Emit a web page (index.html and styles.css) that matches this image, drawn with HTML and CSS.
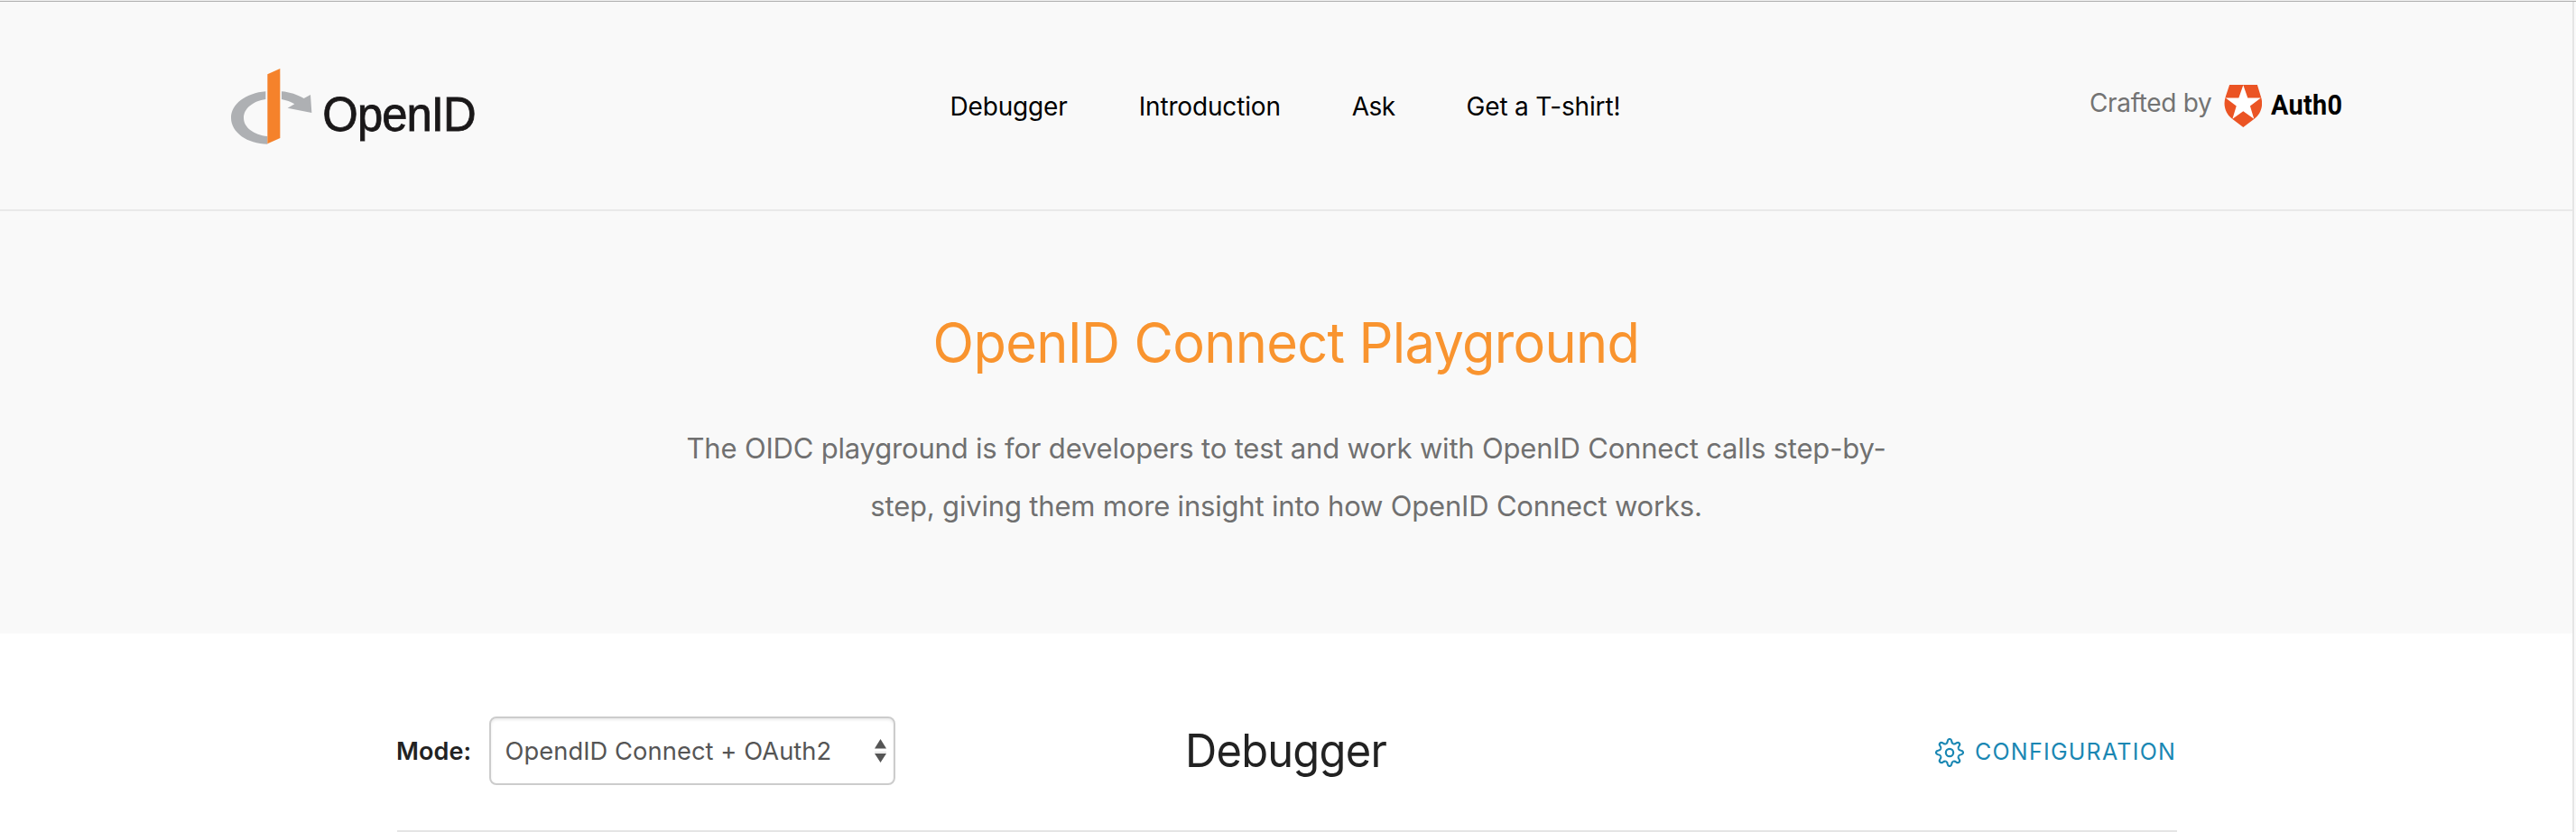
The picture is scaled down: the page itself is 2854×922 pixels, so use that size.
FILE: index.html
```html
<!DOCTYPE html>
<html lang="en">
<head>
<meta charset="utf-8">
<title>OpenID Connect Playground</title>
<link rel="stylesheet" href="styles.css">
</head>
<body>
<div class="page">
  <header class="header">
    <a class="logo">
      <svg class="logo-art" viewBox="0 0 900 330" role="img" aria-label="OpenID">
        <path class="logo-gray" d="M163 124C98 129 48 166 48 212C48 260 102 298 169 299V273C124 268 90 244 90 212C90 181 121 156 163 150Z"/>
        <path class="logo-gray" d="M216 124C243 126 269 135 290 147L312 135L316 195L236 179L259 166C246 158 232 153 216 150Z"/>
        <path class="logo-orange" d="M169 67L211 48V279L169 298Z"/>
        <text class="logo-text" x="352" y="256" textLength="508" lengthAdjust="spacingAndGlyphs">OpenID</text>
      </svg>
    </a>
    <nav class="nav">
      <a>Debugger</a><a>Introduction</a><a class="nav-ask">Ask</a><a>Get a T-shirt!</a>
    </nav>
    <div class="crafted">
      <span class="crafted-by">Crafted by</span>
      <svg class="shield" viewBox="492 43 126 142">
        <path class="shield-body" d="M510 43H603L615 82C625 112 615 141 592 158L556 185L520 158C497 141 487 112 497 82Z"/>
        <path class="shield-star" d="M556 44L571 87H615L579 114L592 157L556 131L520 157L533 114L497 87H541Z"/>
      </svg>
      <span class="auth0">Auth0</span>
    </div>
  </header>
  <section class="hero">
    <h1 class="title">OpenID Connect Playground</h1>
    <p class="lead">The OIDC playground is for developers to test and work with OpenID Connect calls step-by-<br>step, giving them more insight into how OpenID Connect works.</p>
  </section>
  <main class="toolbar">
    <div class="mode">
      <span class="mode-label">Mode:</span>
      <div class="select">
        <span>OpendID Connect + OAuth2</span>
        <svg class="arrows" viewBox="0 0 13 26"><path class="arrow" d="M6.5 0L13 10.5H0ZM0 16H13L6.5 26Z"/><path class="arrow-line" d="M0 14.5H13"/></svg>
      </div>
    </div>
    <h2 class="heading">Debugger</h2>
    <a class="config">
      <svg class="gear" viewBox="-48 -48 96 96">
        <defs><path id="tooth" d="M-12.2 -29.5Q-7.2 -31.6 -6.7 -38Q-5.5 -45 0 -45Q5.5 -45 6.7 -38Q7.2 -31.6 12.2 -29.5"/></defs>
        <use href="#tooth"/><use href="#tooth" transform="rotate(45)"/><use href="#tooth" transform="rotate(90)"/><use href="#tooth" transform="rotate(135)"/><use href="#tooth" transform="rotate(180)"/><use href="#tooth" transform="rotate(225)"/><use href="#tooth" transform="rotate(270)"/><use href="#tooth" transform="rotate(315)"/>
        <circle r="12.5"/>
      </svg>
      <span>CONFIGURATION</span>
    </a>
  </main>
</div>
</body>
</html>
```
FILE: styles.css
```css
* { box-sizing: border-box; }
body {
  margin: 0;
  background: #fafafa;
  font-family: Inter, "Liberation Sans", sans-serif;
  border-top: 1px solid #f0f0f0;
}
.page {
  height: 921px;
  border-top: 1px solid #b2b2b2;
  background: linear-gradient(#e5e5e5, #e5e5e5) 2850px 0 / 2px 100% no-repeat;
  padding-right: 4px;
  overflow: hidden;
}
.header {
  display: flex;
  align-items: flex-start;
  height: 232px;
  padding-left: 240px;
  background: #f9f9f9;
  border-bottom: 2px solid #e9e9e9;
}
.logo { width: 812.5px; padding-top: 58px; }
.logo-art { display: block; width: 300px; height: 110px; }
.logo-gray { fill: #aeb0b3; }
.logo-orange { fill: #f5822b; }
.logo-text {
  font-family: "Liberation Sans", sans-serif;
  font-size: 160px;
  letter-spacing: -3px;
  fill: #1a1819;
  stroke: #1a1819;
  stroke-width: 2.5;
}
.nav {
  display: flex;
  gap: 79px;
  padding-top: 96px;
  font-size: 28px;
  line-height: 40px;
  letter-spacing: -.16px;
  color: #000;
  white-space: nowrap;
}
.nav-ask { letter-spacing: -.6px; }
.crafted {
  display: flex;
  align-items: flex-start;
  margin-left: auto;
  width: 535px;
  padding-top: 92px;
  white-space: nowrap;
}
.crafted-by {
  width: 149px;
  font-size: 28px;
  line-height: 40px;
  letter-spacing: -.33px;
  color: #737373;
}
.shield { width: 42px; height: 47px; }
.shield-body { fill: #eb5424; }
.shield-star { fill: #fff; }
.auth0 {
  margin-left: 10px;
  padding-top: 3px;
  font: 700 31px/40px Roboto, sans-serif;
  letter-spacing: .3px;
  transform: scaleX(.93);
  transform-origin: left;
  color: #000;
}
.hero {
  height: 468px;
  padding-top: 106px;
  background: #f9f9f9;
  text-align: center;
  white-space: nowrap;
}
.title {
  margin: 0;
  font-size: 62px;
  line-height: 80px;
  font-weight: 400;
  letter-spacing: -.7px;
  transform: scaleX(.96);
  color: #f9942f;
}
.lead {
  margin: 45px 0 0;
  font-size: 31px;
  line-height: 64px;
  letter-spacing: -.186px;
  color: #707070;
}
.toolbar {
  display: grid;
  grid-template-columns: 872px 832px 1fr;
  align-items: center;
  height: 220px;
  padding: 91px 0 51px 439px;
  background: linear-gradient(#e5e5e5, #e5e5e5) 440px 218px / 1972px 2px no-repeat, #fff;
  white-space: nowrap;
}
.mode { display: flex; align-items: center; }
.mode-label {
  width: 103px;
  font-size: 27px;
  font-weight: 600;
  letter-spacing: .1px;
  color: #222;
}
.select {
  display: flex;
  align-items: center;
  justify-content: space-between;
  width: 450px;
  height: 76px;
  padding: 0 8px 0 15.5px;
  border: 2px solid #ccc;
  border-radius: 8px;
  box-shadow: inset 0 2px 3px rgba(0, 0, 0, .08);
  background: #fff;
  font-size: 27.3px;
  letter-spacing: .07px;
  color: #555;
}
.arrows { width: 13px; height: 26px; }
.arrow { fill: #555; }
.arrow-line { stroke: #ddd; stroke-width: 1; }
.heading {
  margin: 0 0 0 2px;
  font-size: 51px;
  line-height: 60px;
  font-weight: 400;
  letter-spacing: -.8px;
  transform: scaleX(.957);
  transform-origin: left;
  color: #222;
}
.config {
  display: flex;
  align-items: center;
  gap: 12px;
  margin: 2px 0 0 1px;
  font-size: 25px;
  letter-spacing: 1.24px;
  color: #1a87b3;
}
.gear {
  width: 32px;
  height: 32px;
  margin-top: 2px;
  fill: none;
  stroke: #1a87b3;
  stroke-width: 6.5;
}
```
